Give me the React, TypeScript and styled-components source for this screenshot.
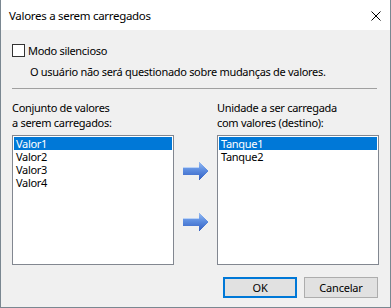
import React from "react";
import styled, { createGlobalStyle } from "styled-components";

const FONT = `"Noto Sans", "Open Sans", sans-serif`;

const Global = createGlobalStyle`
  html, body { margin: 0; padding: 0; background: #ffffff; }
  body { font-family: ${FONT}; font-size: 11px; letter-spacing: -0.3px; color: #000; }
`;

const Window = styled.div`
  width: 391px;
  height: 308px;
  box-sizing: border-box;
  border: 1px solid #7a8791;
  border-top: none;
  display: flex;
  flex-direction: column;
  background: #f0f0f0;
`;

const TitleBar = styled.div`
  height: 30px;
  background: #ffffff;
  display: flex;
  align-items: center;
  justify-content: space-between;
  padding: 0 9px 0 8px;
  flex-shrink: 0;
`;

const Title = styled.div`
  font-size: 11.5px;
  line-height: 15px;
`;

const CloseIcon = styled.svg`
  width: 10px;
  height: 10px;
  margin-top: 1px;
`;

const Body = styled.div`
  flex: 1;
  display: flex;
  flex-direction: column;
  padding: 14px 11px 0 11px;
`;

const CheckRow = styled.label`
  display: flex;
  align-items: center;
  gap: 3px;
  height: 13px;
`;

const CheckBox = styled.span`
  width: 11px;
  height: 11px;
  border: 1px solid #333333;
  background: #ffffff;
  display: inline-block;
  flex-shrink: 0;
`;

const Text = styled.span`
  line-height: 13px;
`;

const Description = styled.div`
  margin: 8px 0 0 18px;
  line-height: 14px;
  height: 14px;
`;

const Separator = styled.div`
  margin: 9px 2px 0 0;
  height: 1px;
  background: #a0a0a0;
`;

const Columns = styled.div`
  display: flex;
  margin-top: 11px;
`;

const Column = styled.div`
  width: 162px;
  display: flex;
  flex-direction: column;
`;

const Label = styled.div`
  line-height: 14.5px;
  height: 35px;
  padding-top: 1px;
  box-sizing: border-box;
`;

const ListBox = styled.div`
  height: 130px;
  box-sizing: border-box;
  border: 1px solid #828790;
  background: #ffffff;
  padding: 1px;
  display: flex;
  flex-direction: column;
`;

const Item = styled.div<{ $selected?: boolean }>`
  height: 13px;
  line-height: 13px;
  padding-left: 2px;
  background: ${(p) => (p.$selected ? "#0078d7" : "transparent")};
  color: ${(p) => (p.$selected ? "#ffffff" : "#000000")};
`;

const ArrowColumn = styled.div`
  width: 43px;
  display: flex;
  flex-direction: column;
  align-items: center;
  padding-top: 61px;
  gap: 31px;
`;

const Footer = styled.div`
  display: flex;
  justify-content: flex-end;
  gap: 7px;
  margin-top: 12px;
  padding-right: 1px;
`;

const Button = styled.button<{ $default?: boolean }>`
  width: 74px;
  height: 21px;
  box-sizing: border-box;
  background: #e1e1e1;
  border: ${(p) => (p.$default ? "2px solid #0078d7" : "1px solid #adadad")};
  font-family: ${FONT};
  font-size: 11px;
  letter-spacing: -0.2px;
  color: #000;
  padding: 0;
`;

function Arrow() {
  return (
    <svg width="25" height="20" viewBox="0 0 25 20" shapeRendering="crispEdges">
      <defs>
        <linearGradient id="ag" x1="0" y1="0" x2="0" y2="1">
          <stop offset="0" stopColor="#9cc0f4" />
          <stop offset="0.45" stopColor="#5d8de0" />
          <stop offset="1" stopColor="#2f5bbf" />
        </linearGradient>
      </defs>
      <path d="M0 6 H16 V0 L25 10 L16 20 V14 H0 Z" fill="url(#ag)" />
      <path d="M0 6 H16 V7 H0 Z" fill="#b9d2f7" />
    </svg>
  );
}

export default function App() {
  return (
    <>
      <Global />
      <Window>
        <TitleBar>
          <Title>Valores a serem carregados</Title>
          <CloseIcon viewBox="0 0 10 10">
            <path d="M0.5 0.5 L9.5 9.5 M9.5 0.5 L0.5 9.5" stroke="#000" strokeWidth="1" />
          </CloseIcon>
        </TitleBar>
        <Body>
          <CheckRow>
            <CheckBox />
            <Text>Modo silencioso</Text>
          </CheckRow>
          <Description>O usuário não será questionado sobre mudanças de valores.</Description>
          <Separator />
          <Columns>
            <Column>
              <Label>
                Conjunto de valores
                <br />a serem carregados:
              </Label>
              <ListBox>
                <Item $selected>Valor1</Item>
                <Item>Valor2</Item>
                <Item>Valor3</Item>
                <Item>Valor4</Item>
              </ListBox>
            </Column>
            <ArrowColumn>
              <Arrow />
              <Arrow />
            </ArrowColumn>
            <Column>
              <Label>
                Unidade a ser carregada
                <br />
                com valores (destino):
              </Label>
              <ListBox>
                <Item $selected>Tanque1</Item>
                <Item>Tanque2</Item>
              </ListBox>
            </Column>
          </Columns>
          <Footer>
            <Button $default>OK</Button>
            <Button>Cancelar</Button>
          </Footer>
        </Body>
      </Window>
    </>
  );
}
